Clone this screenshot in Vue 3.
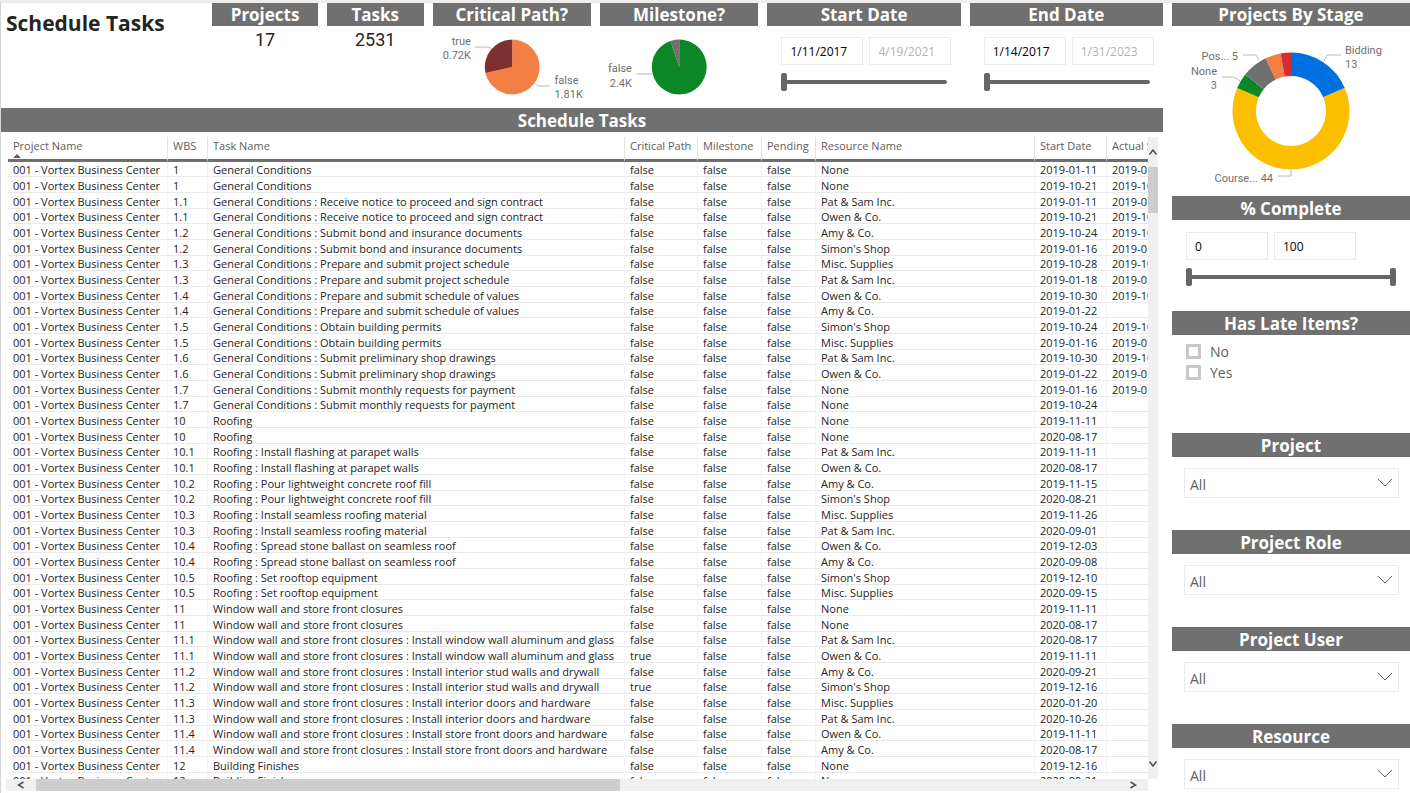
<template>
  <div class="report">
    <main class="main">
      <header class="top">
        <h1 class="title">Schedule Tasks</h1>

        <section class="card">
          <h2 class="bar">Projects</h2>
          <div class="count">17</div>
        </section>

        <section class="card">
          <h2 class="bar">Tasks</h2>
          <div class="count">2531</div>
        </section>

        <section class="card">
          <h2 class="bar">Critical Path?</h2>
          <svg class="pie" viewBox="0 0 159 82">
            <path v-for="s in criticalSlices" :key="s.color" :d="s.d" :fill="s.color" />
            <path class="leader" d="M42 21H56L59 23M102 57L105 60H117" />
            <text x="38" y="19" text-anchor="end">true</text>
            <text x="38" y="33" text-anchor="end">0.72K</text>
            <text x="122" y="58">false</text>
            <text x="122" y="72">1.81K</text>
          </svg>
        </section>

        <section class="card">
          <h2 class="bar">Milestone?</h2>
          <svg class="pie" viewBox="0 0 159 82">
            <path v-for="s in milestoneSlices" :key="s.color" :d="s.d" :fill="s.color" />
            <path class="leader" d="M37 48H50L53 47" />
            <text x="32" y="46" text-anchor="end">false</text>
            <text x="32" y="61" text-anchor="end">2.4K</text>
          </svg>
        </section>

        <section v-for="f in dateFilters" :key="f.label" class="card">
          <h2 class="bar">{{ f.label }}</h2>
          <div class="range">
            <div class="boxes">
              <input v-model="f.from" class="box" type="text" :aria-label="f.label + ' from'" />
              <input class="box" type="text" :value="f.to" disabled :aria-label="f.label + ' to'" />
            </div>
            <div class="slider slider-date">
              <input v-model="f.pos" type="range" min="0" max="100" :aria-label="f.label" />
            </div>
          </div>
        </section>
      </header>

      <section class="tasks">
        <h2 class="bar">Schedule Tasks</h2>
        <div class="grid">
          <div class="viewport">
            <table>
              <colgroup>
                <col v-for="c in columns" :key="c.key" :class="'col-' + c.key" />
              </colgroup>
              <thead>
                <tr>
                  <th v-for="c in columns" :key="c.key" scope="col">
                    {{ c.label }}
                    <svg v-if="c.key === 'project'" class="sort" viewBox="0 0 8 4">
                      <path d="M0 4L4 0L8 4Z" />
                    </svg>
                  </th>
                </tr>
              </thead>
              <tbody>
                <tr v-for="(r, i) in rows" :key="i">
                  <td v-for="c in columns" :key="c.key">{{ r[c.key] }}</td>
                </tr>
              </tbody>
            </table>
          </div>
          <div class="vscroll">
            <button type="button" aria-label="Scroll up">
              <svg viewBox="0 0 10 10"><path d="M1.5 7.5L5 3L8.5 7.5" /></svg>
            </button>
            <div class="vthumb"></div>
            <button type="button" class="down" aria-label="Scroll down">
              <svg viewBox="0 0 10 10"><path d="M1.5 2.5L5 7L8.5 2.5" /></svg>
            </button>
          </div>
          <div class="hscroll">
            <button type="button" aria-label="Scroll left">
              <svg viewBox="0 0 10 10"><path d="M7.5 2L2.5 5L7.5 8" /></svg>
            </button>
            <div class="htrack"><div class="hthumb"></div></div>
            <button type="button" aria-label="Scroll right">
              <svg viewBox="0 0 10 10"><path d="M2.5 2L7.5 5L2.5 8" /></svg>
            </button>
          </div>
        </div>
      </section>
    </main>

    <aside class="side">
      <section class="panel panel-stage">
        <h2 class="bar">Projects By Stage</h2>
        <svg class="donut" viewBox="0 0 238 170">
          <path v-for="s in stageSlices" :key="s.color" :d="s.d" :fill="s.color" />
          <path class="leader" d="M152 35L155 29H169M71 29H84L87 34M50 51H62L68 55M106 150H119V144" />
          <text x="173" y="28">Bidding</text>
          <text x="173" y="42">13</text>
          <text x="66" y="34" text-anchor="end">Pos... 5</text>
          <text x="45" y="49" text-anchor="end">None</text>
          <text x="45" y="63" text-anchor="end">3</text>
          <text x="101" y="156" text-anchor="end">Course... 44</text>
        </svg>
      </section>

      <section class="panel panel-complete">
        <h2 class="bar">% Complete</h2>
        <div class="range">
          <div class="boxes">
            <input v-model="minComplete" class="box" type="text" aria-label="Minimum complete" />
            <input v-model="maxComplete" class="box" type="text" aria-label="Maximum complete" />
          </div>
          <div class="slider">
            <input v-model="minComplete" type="range" min="0" max="100" aria-label="Minimum" />
            <input v-model="maxComplete" type="range" min="0" max="100" aria-label="Maximum" />
          </div>
        </div>
      </section>

      <section class="panel panel-late">
        <h2 class="bar">Has Late Items?</h2>
        <div class="checks">
          <label v-for="o in ['No', 'Yes']" :key="o">
            <input v-model="late" type="checkbox" :value="o" />{{ o }}
          </label>
        </div>
      </section>

      <section v-for="name in dropdowns" :key="name" class="panel panel-drop">
        <h2 class="bar">{{ name }}</h2>
        <div class="drop">
          <select :aria-label="name">
            <option>All</option>
          </select>
          <svg viewBox="0 0 16 10"><path d="M1 1L8 8L15 1" /></svg>
        </div>
      </section>
    </aside>
  </div>
</template>

<script setup>
import { ref, reactive } from 'vue'

const dateFilters = reactive([
  { label: 'Start Date', from: '1/11/2017', to: '4/19/2021', pos: 0 },
  { label: 'End Date', from: '1/14/2017', to: '1/31/2023', pos: 0 },
])
const minComplete = ref(0)
const maxComplete = ref(100)
const late = ref([])
const dropdowns = ['Project', 'Project Role', 'Project User', 'Resource']

// slices run clockwise from 12 o'clock; inner = 0 gives a full pie
function slices(cx, cy, r, inner, data) {
  const total = data.reduce((sum, d) => sum + d.value, 0)
  const point = (radius, a) => `${cx + radius * Math.sin(a)} ${cy - radius * Math.cos(a)}`
  let start = 0
  return data.map(({ value, color }) => {
    const end = start + (value / total) * Math.PI * 2
    const large = end - start > Math.PI ? 1 : 0
    const d =
      `M${point(r, start)}A${r} ${r} 0 ${large} 1 ${point(r, end)}` +
      `L${point(inner, end)}` +
      (inner ? `A${inner} ${inner} 0 ${large} 0 ${point(inner, start)}` : '') +
      'Z'
    start = end
    return { d, color }
  })
}

const criticalSlices = slices(79.5, 41, 27.5, 0, [
  { value: 1.81, color: '#f47f44' },
  { value: 0.72, color: '#7d302f' },
])
const milestoneSlices = slices(79.5, 41, 27.5, 0, [
  { value: 2.4, color: '#0c8726' },
  { value: 0.13, color: '#707070' },
])
const stageSlices = slices(119, 85, 58.5, 35, [
  { value: 13, color: '#006fe0' },
  { value: 44, color: '#fcbf00' },
  { value: 3, color: '#0c8726' },
  { value: 5, color: '#707070' },
  { value: 3, color: '#f47f44' },
  { value: 2, color: '#d92c30' },
])

const columns = [
  { key: 'project', label: 'Project Name' },
  { key: 'wbs', label: 'WBS' },
  { key: 'task', label: 'Task Name' },
  { key: 'critical', label: 'Critical Path' },
  { key: 'milestone', label: 'Milestone' },
  { key: 'pending', label: 'Pending' },
  { key: 'resource', label: 'Resource Name' },
  { key: 'start', label: 'Start Date' },
  { key: 'actual', label: 'Actual Start' },
]

const GC = 'General Conditions'
const RF = 'Roofing'
const WW = 'Window wall and store front closures'

// each task shows up twice, with one start date per row
const tasks = [
  ['1', GC, '2019-01-11', '2019-10-21'],
  ['1.1', GC + ' : Receive notice to proceed and sign contract', '2019-01-11', '2019-10-21'],
  ['1.2', GC + ' : Submit bond and insurance documents', '2019-10-24', '2019-01-16'],
  ['1.3', GC + ' : Prepare and submit project schedule', '2019-10-28', '2019-01-18'],
  ['1.4', GC + ' : Prepare and submit schedule of values', '2019-10-30', '2019-01-22'],
  ['1.5', GC + ' : Obtain building permits', '2019-10-24', '2019-01-16'],
  ['1.6', GC + ' : Submit preliminary shop drawings', '2019-10-30', '2019-01-22'],
  ['1.7', GC + ' : Submit monthly requests for payment', '2019-01-16', '2019-10-24'],
  ['10', RF, '2019-11-11', '2020-08-17'],
  ['10.1', RF + ' : Install flashing at parapet walls', '2019-11-11', '2020-08-17'],
  ['10.2', RF + ' : Pour lightweight concrete roof fill', '2019-11-15', '2020-08-21'],
  ['10.3', RF + ' : Install seamless roofing material', '2019-11-26', '2020-09-01'],
  ['10.4', RF + ' : Spread stone ballast on seamless roof', '2019-12-03', '2020-09-08'],
  ['10.5', RF + ' : Set rooftop equipment', '2019-12-10', '2020-09-15'],
  ['11', WW, '2019-11-11', '2020-08-17'],
  ['11.1', WW + ' : Install window wall aluminum and glass', '2020-08-17', '2019-11-11'],
  ['11.2', WW + ' : Install interior stud walls and drywall', '2020-09-21', '2019-12-16'],
  ['11.3', WW + ' : Install interior doors and hardware', '2020-01-20', '2020-10-26'],
  ['11.4', WW + ' : Install store front doors and hardware', '2019-11-11', '2020-08-17'],
  ['12', 'Building Finishes', '2019-12-16', '2020-09-21'],
]

const crews = ['Pat & Sam Inc.', 'Owen & Co.', 'Amy & Co.', "Simon's Shop", 'Misc. Supplies']
const unassigned = ['1', '1.7', '10', '11', '12']
const criticalRows = [31, 33]
const notStarted = [9, 15]

let crew = 0
const rows = tasks
  .flatMap(([wbs, task, first, second]) => [
    { wbs, task, start: first },
    { wbs, task, start: second },
  ])
  .map((r, i) => {
    // the crew rotation starts over in each division
    if (['1', '10', '11'].includes(r.wbs)) crew = 0
    return {
      ...r,
      project: '001 - Vortex Business Center',
      critical: String(criticalRows.includes(i)),
      milestone: 'false',
      pending: 'false',
      resource: unassigned.includes(r.wbs) ? 'None' : crews[crew++ % crews.length],
      actual: i < 16 && !notStarted.includes(i) ? r.start : '',
    }
  })
</script>

<style>
body {
  margin: 0;
  background: #fff;
}
</style>

<style scoped>
.report {
  box-sizing: border-box;
  display: flex;
  gap: 9px;
  height: 100vh;
  overflow: hidden;
  border-top: 3px solid #eeedec;
  border-left: 1px solid #d6d6d6;
  font-family: 'Open Sans', 'Noto Sans', sans-serif;
  color: #252423;
}

.main {
  flex: 1;
  min-width: 0;
  display: flex;
  flex-direction: column;
}

.bar {
  box-sizing: border-box;
  margin: 0;
  height: 24px;
  padding-top: 2px;
  background: #707070;
  color: #fff;
  font-size: 17px;
  font-weight: 700;
  line-height: 22px;
  text-align: center;
  white-space: nowrap;
}

/* top row */
.top {
  display: grid;
  grid-template-columns: 203fr 106fr 97fr 159fr 159fr 194fr 194fr;
  column-gap: 9px;
  height: 105px;
}

.top .bar,
.panel-stage .bar {
  height: 23px;
  padding-top: 1px;
}

.card { min-width: 0; }

.title {
  margin: 0;
  padding: 5px 0 0 5px;
  font-size: 21px;
  line-height: 30px;
  white-space: nowrap;
}

.count {
  font-family: Roboto, sans-serif;
  font-size: 18px;
  line-height: 28px;
  text-align: center;
}

.pie,
.donut {
  display: block;
  width: 100%;
  font-family: Roboto, sans-serif;
  font-size: 11px;
  fill: #707070;
}

.pie { height: 82px; }
.donut { height: 170px; }

.leader {
  fill: none;
  stroke: #b8b8b8;
}

/* range filters */
.range { padding: 12px 14px 0; }

.top .range { padding-top: 11px; }

.boxes {
  display: flex;
  gap: 6px;
}

.box {
  box-sizing: border-box;
  width: 82px;
  height: 28px;
  padding: 0 8px;
  border: 1px solid #eaeaea;
  background: #fff;
  color: #000;
  font-family: inherit;
  font-size: 12px;
}

.box:disabled { color: #b3b3b3; }

.slider {
  display: grid;
  align-items: center;
  height: 18px;
  margin-top: 8px;
}

.slider-date { width: 166px; }

.slider::before {
  content: '';
  grid-area: 1 / 1;
  height: 4px;
  border-radius: 2px;
  background: #666;
}

.slider input {
  grid-area: 1 / 1;
  appearance: none;
  width: 100%;
  height: 18px;
  margin: 0;
  background: none;
  pointer-events: none;
}

.slider input::-webkit-slider-thumb {
  appearance: none;
  width: 6px;
  height: 18px;
  border-radius: 2px;
  background: #666;
  pointer-events: auto;
}

/* task table */
.tasks {
  flex: 1;
  min-height: 0;
  display: flex;
  flex-direction: column;
}

.grid {
  flex: 1;
  min-height: 0;
  display: grid;
  grid-template: minmax(0, 1fr) 12px / minmax(0, 1fr) 10px;
  padding: 5px 5px 2px;
}

.viewport {
  overflow: hidden;
  padding-left: 2px;
}

table {
  width: 1180px;
  table-layout: fixed;
  border-collapse: separate;
  border-spacing: 0;
  font-size: 11px;
}

.col-project { width: 160px; }
.col-wbs { width: 40px; }
.col-task { width: 417px; }
.col-critical { width: 73px; }
.col-milestone { width: 64px; }
.col-pending { width: 54px; }
.col-resource { width: 219px; }
.col-start { width: 72px; }
.col-actual { width: 81px; }

th,
td {
  box-sizing: border-box;
  padding: 0 0 0 5px;
  text-align: left;
  white-space: nowrap;
}

th {
  position: relative;
  height: 25px;
  padding-top: 1px;
  padding-bottom: 5px;
  border-right: 1px solid #e3e3e3;
  border-bottom: 3px solid #707070;
  color: #605e5c;
  font-weight: 400;
  line-height: 16px;
}

.sort {
  position: absolute;
  left: 5px;
  bottom: 1px;
  width: 8px;
  height: 4px;
  fill: #605e5c;
}

td {
  height: 16px;
  padding-top: 1px;
  border-right: 1px solid #f5f5f5;
  border-bottom: 1px solid #e9e9e9;
  line-height: 13px;
}

tr:nth-child(3n + 1) td { height: 15px; }

.vscroll,
.hscroll {
  display: flex;
  background: #f0f0f0;
}

.vscroll { flex-direction: column; }

.vscroll button,
.hscroll button {
  display: flex;
  align-items: center;
  justify-content: center;
  width: 30px;
  padding: 0;
  border: 0;
  background: none;
}

.vscroll button {
  width: 10px;
  height: 30px;
}

.vscroll .down { margin-top: auto; }

.vscroll svg,
.hscroll svg {
  width: 10px;
  height: 10px;
  fill: none;
  stroke: #505050;
  stroke-width: 1.5;
}

.vthumb {
  height: 46px;
  background: #cdcdcd;
}

.htrack { flex: 1; }

.hthumb {
  width: 54%;
  height: 100%;
  background: #cdcdcd;
}

/* right column */
.side {
  flex: 0 0 238px;
}

.panel-stage { height: 193px; }
.panel-complete { height: 115px; }
.panel-late { height: 122px; }
.panel-drop { height: 97px; }

.checks {
  display: flex;
  flex-direction: column;
  padding: 6px 14px;
}

.checks label {
  display: flex;
  align-items: center;
  gap: 9px;
  height: 21px;
  color: #605e5c;
  font-size: 14px;
}

.checks input {
  appearance: none;
  width: 15px;
  height: 15px;
  margin: 0;
  border: 3px solid #c8c8c8;
  background: #fff;
}

.checks input:checked { background: #605e5c; }

.drop {
  display: grid;
  align-items: center;
  padding: 11px 11px 0 12px;
}

.drop select {
  grid-area: 1 / 1;
  appearance: none;
  width: 100%;
  height: 30px;
  padding: 2px 5px 0;
  border: 1px solid #eaeaea;
  border-radius: 0;
  background: #fff;
  color: #605e5c;
  font-family: inherit;
  font-size: 14px;
}

.drop svg {
  grid-area: 1 / 1;
  justify-self: end;
  width: 16px;
  height: 10px;
  margin-right: 6px;
  fill: none;
  stroke: #605e5c;
  pointer-events: none;
}
</style>
